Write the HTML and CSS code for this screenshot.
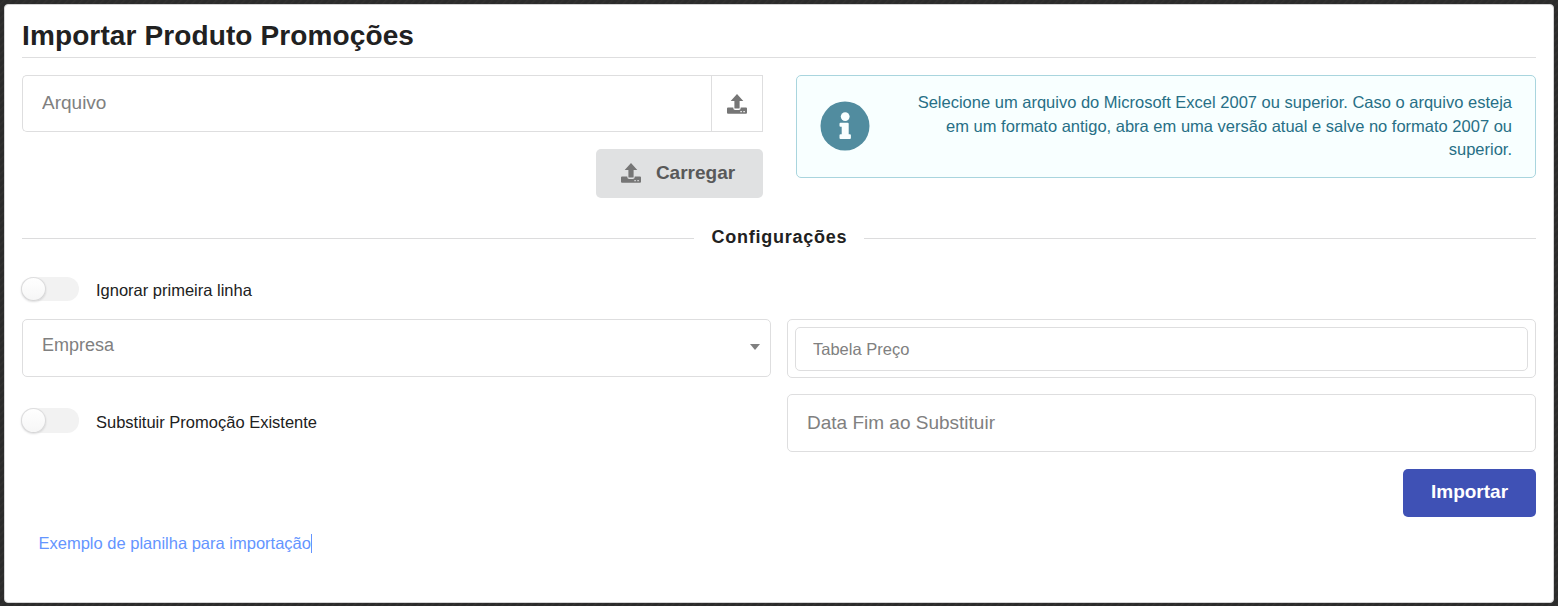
FILE: index.html
```html
<!DOCTYPE html>
<html lang="pt-BR">
<head>
  <meta charset="UTF-8">
  <meta name="viewport" content="width=device-width, initial-scale=1.0">
  <title>Importar Produto Promoções</title>
  <link rel="stylesheet" href="styles.css">
</head>
<body>
  <!-- Icons -->
  <svg class="sprite" width="0" height="0">
    <symbol id="icon-upload" viewBox="0 0 20 20">
      <path d="M10 0 L16.3 6.9 H12.6 V14 Q12.6 14.6 12 14.6 H8 Q7.4 14.6 7.4 14 V6.9 H3.7 Z"/>
      <path d="M1 13.4 H6.3 V14 Q6.3 16 8.2 16 H11.8 Q13.7 16 13.7 14 V13.4 H19 Q20 13.4 20 14.4 V18.7 Q20 19.7 19 19.7 H1 Q0 19.7 0 18.7 V14.4 Q0 13.4 1 13.4 Z M13.4 17.1 V18.3 H14.8 V17.1 Z M16.4 17.1 V18.3 H17.8 V17.1 Z" fill-rule="evenodd"/>
    </symbol>
  </svg>

  <main class="segment">
    <h1 class="header">Importar Produto Promoções</h1>

    <form class="form">
      <div class="upload-row">
        <div class="upload">
          <div class="file-input">
            <input type="text" placeholder="Arquivo">
            <button type="button" class="file-btn"><svg class="icon"><use href="#icon-upload"/></svg></button>
          </div>
          <button type="button" class="btn btn-load"><svg class="icon"><use href="#icon-upload"/></svg><span>Carregar</span></button>
        </div>

        <div class="message">
          <svg class="info-icon" viewBox="0 0 50 50">
            <circle cx="25" cy="25" r="24.5" fill="#518c9f"/>
            <circle cx="25.2" cy="15.6" r="4.4" fill="#f8ffff"/>
            <path d="M20.5 21.7 h7.2 q1 0 1 1 v10.6 h1.2 q1 0 1 1 v2.6 q0 1 -1 1 h-9.4 q-1 0 -1 -1 v-2.6 q0 -1 1 -1 h1.2 v-7.6 h-1.2 q-1 0 -1 -1 v-2 q0 -1 1 -1 z" fill="#f8ffff"/>
          </svg>
          <p>Selecione um arquivo do Microsoft Excel 2007 ou superior. Caso o arquivo esteja em um formato antigo, abra em uma versão atual e salve no formato 2007 ou superior.</p>
        </div>
      </div>

      <h2 class="divider">Configurações</h2>

      <label class="toggle">
        <span class="switch"></span>
        <span>Ignorar primeira linha</span>
      </label>

      <div class="fields">
        <div class="dropdown">
          <span>Empresa</span>
          <i class="caret"></i>
        </div>
        <div class="search-box">
          <input type="text" placeholder="Tabela Preço">
        </div>
        <label class="toggle">
          <span class="switch"></span>
          <span>Substituir Promoção Existente</span>
        </label>
        <input class="date" type="text" placeholder="Data Fim ao Substituir">
      </div>

      <button type="button" class="btn btn-import">Importar</button>
    </form>

    <a class="example-link" href="#">Exemplo de planilha para importação</a>
  </main>
</body>
</html>
```

FILE: styles.css
```css
* {
  box-sizing: border-box;
}
body {
  margin: 0;
  padding: 4px;
  height: 606px;
  overflow: hidden;
  background: repeating-linear-gradient(135deg, #2b2b2b 0, #2b2b2b 2px, #323130 3px, #2b2b2b 5px);
  font-family: "Liberation Sans", Arial, sans-serif;
  font-size: 16.5px;
  color: #212121;
}
input, button {
  font-family: inherit;
}
input::placeholder {
  color: #808080;
  opacity: 1;
}
.sprite {
  position: absolute;
}

.segment {
  height: 599px;
  padding: 0 17px;
  background: #fff;
  border: 1px solid #d4d4d5;
  border-radius: 4px;
}
.header {
  height: 53px;
  margin: 0 0 17px;
  padding-top: 15px;
  border-bottom: 1px solid #dededf;
  font-size: 28px;
  line-height: 32px;
  letter-spacing: 0.12px;
}
.icon {
  width: 20px;
  height: 20px;
  fill: #767676;
}

/* File upload + message */
.upload-row {
  display: grid;
  grid-template-columns: 741px 740px;
  justify-content: space-between;
  align-items: start;
}
.upload {
  display: flex;
  flex-direction: column;
  align-items: flex-end;
  gap: 17px;
}
.file-input {
  display: flex;
  width: 100%;
  height: 57px;
}
.file-input input {
  flex: 1;
  padding: 0 19px 2px;
  border: 1px solid #dededf;
  border-right: 0;
  border-radius: 5px 0 0 5px;
  font-size: 19px;
}
.file-btn {
  display: flex;
  align-items: center;
  justify-content: center;
  width: 52px;
  padding: 1px 0 0;
  background: #fff;
  border: 1px solid #dededf;
}
.btn {
  display: flex;
  align-items: center;
  justify-content: center;
  border: 0;
  border-radius: 5px;
  font-size: 19px;
  font-weight: bold;
}
.btn-load {
  gap: 15px;
  width: 167px;
  height: 49px;
  padding: 0 3px 1px 0;
  background: #e0e1e2;
  color: #595959;
}
.message {
  display: flex;
  align-items: center;
  height: 103px;
  padding: 0 23px;
  background: #f8ffff;
  border: 1px solid #a9d5de;
  border-radius: 5px;
  color: #276f86;
}
.info-icon {
  flex: none;
  width: 50px;
  height: 50px;
  margin-bottom: 1px;
}
.message p {
  flex: 1;
  margin: 0 0 0 32px;
  line-height: 23.5px;
  text-align: right;
}

/* Horizontal divider with title */
.divider {
  display: flex;
  align-items: center;
  gap: 18px;
  height: 24px;
  margin: 27px 0 28px;
  font-size: 18px;
  letter-spacing: 0.75px;
}
.divider::before,
.divider::after {
  content: '';
  flex: 1;
  height: 1px;
  margin-top: 2px;
  background: #dcdcdd;
}
.divider::after {
  margin-left: -1px;
}

/* Toggles */
.toggle {
  display: flex;
  align-items: center;
  gap: 17px;
  height: 24px;
}
.switch {
  width: 58px;
  height: 24px;
  margin-left: -1px;
  background: #f2f2f2;
  border-radius: 12px;
}
.switch + span {
  padding-top: 2px;
}
.switch::before {
  content: '';
  display: block;
  width: 25px;
  height: 24px;
  background: linear-gradient(#fff, #f6f6f6);
  border-radius: 50%;
  box-shadow: 0 1px 2px rgba(34, 36, 38, 0.15), 0 0 0 1px rgba(34, 36, 38, 0.15) inset;
}

/* Fields */
.fields {
  display: grid;
  grid-template-columns: 1fr 1fr;
  column-gap: 16px;
  row-gap: 16px;
  margin-top: 18px;
}
.dropdown, .search-box, .date {
  border: 1px solid #dededf;
  border-radius: 5px;
  font-size: 19px;
}
.dropdown {
  display: flex;
  justify-content: space-between;
  align-items: center;
  height: 58px;
  padding: 0 10px 6px 19px;
  color: #808080;
  font-size: 18px;
}
.caret {
  margin-top: 4px;
  border: 5px solid transparent;
  border-top: 6px solid #808080;
  border-bottom: 0;
}
.search-box {
  height: 59px;
  padding: 7px;
}
.search-box input {
  width: 100%;
  height: 44px;
  padding: 0 17px;
  border: 1px solid #dededf;
  border-radius: 5px;
  font-size: 16.5px;
}
.fields .toggle {
  height: 25px;
  margin-top: 14px;
}
.fields .switch,
.fields .switch::before {
  height: 25px;
}
.fields .switch + span {
  padding-top: 3px;
}
.date {
  height: 58px;
  padding: 0 19px;
}
.btn-import {
  width: 133px;
  height: 48px;
  margin: 17px 0 0 auto;
  padding-bottom: 4px;
  background: #3f51b5;
  color: #fff;
}
.example-link {
  display: inline-block;
  height: 19px;
  margin: 17px 0 0 16.5px;
  border-right: 1px solid #6495ff;
  color: #6495ff;
  line-height: 19px;
  text-decoration: none;
}
```
